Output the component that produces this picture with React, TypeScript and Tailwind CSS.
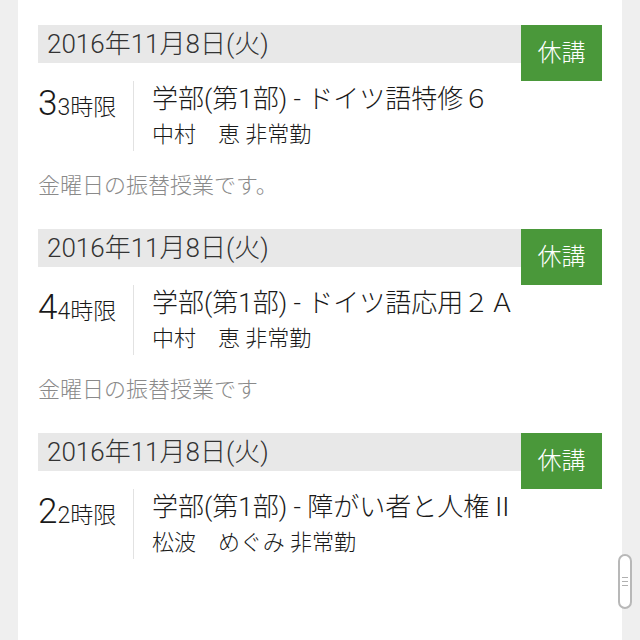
type Lecture = {
  date: string;
  period: number;
  title: string;
  teacher: string;
  note?: string;
};

const lectures: Lecture[] = [
  {
    date: '2016年11月8日(火)',
    period: 3,
    title: '学部(第1部) - ドイツ語特修６',
    teacher: '中村　恵 非常勤',
    note: '金曜日の振替授業です。'
  },
  {
    date: '2016年11月8日(火)',
    period: 4,
    title: '学部(第1部) - ドイツ語応用２Ａ',
    teacher: '中村　恵 非常勤',
    note: '金曜日の振替授業です'
  },
  {
    date: '2016年11月8日(火)',
    period: 2,
    title: '学部(第1部) - 障がい者と人権Ⅱ',
    teacher: '松波　めぐみ 非常勤'
  }
];

const LectureBlock = ({ lecture }: { lecture: Lecture }) => (
  <div className="mb-[28px]">
    <div className="flex items-start">
      <div className="flex h-[38px] flex-1 items-center bg-[#e8e8e8] pl-[9px] text-[26px] leading-none text-[#333]">
        {lecture.date}
      </div>
      <div className="flex h-[56px] w-[81px] items-center justify-center bg-[#4a983a] text-[24px] text-white">
        休講
      </div>
    </div>

    <div className="flex h-[70px]">
      <div className="w-[95px] pt-[6px] leading-[34px] text-[#1a1a1a]">
        <span className="text-[35px]">{lecture.period}</span>
        <span className="text-[23px]">{lecture.period}時限</span>
      </div>
      <div className="flex flex-col border-l border-[#e2e2e2] pl-[18px] pt-[2px] text-[#1a1a1a]">
        <span className="text-[26px] leading-[32px]">{lecture.title}</span>
        <span className="mt-[5px] text-[22px] leading-[30px]">{lecture.teacher}</span>
      </div>
    </div>

    {lecture.note && (
      <p className="mt-[20px] text-[22px] leading-[30px] text-[#8a8a8a]">{lecture.note}</p>
    )}
  </div>
);

export default function App() {
  return (
    <div
      className="relative h-[640px] overflow-hidden bg-[#efefef] px-[18px] font-light"
      style={{ fontFamily: 'Roboto, "Noto Sans CJK JP", sans-serif' }}
    >
      <div className="h-full bg-white px-[20px] pt-[25px]">
        {lectures.map((lecture, i) => (
          <LectureBlock key={i} lecture={lecture} />
        ))}
      </div>

      <div className="absolute right-[8px] top-[554px] flex h-[55px] w-[14px] flex-col items-center justify-center gap-[3px] rounded-full border-2 border-[#b8b8b8] bg-white">
        <span className="h-px w-[6px] bg-[#b0b0b0]" />
        <span className="h-px w-[6px] bg-[#b0b0b0]" />
        <span className="h-px w-[6px] bg-[#b0b0b0]" />
      </div>
    </div>
  );
}
